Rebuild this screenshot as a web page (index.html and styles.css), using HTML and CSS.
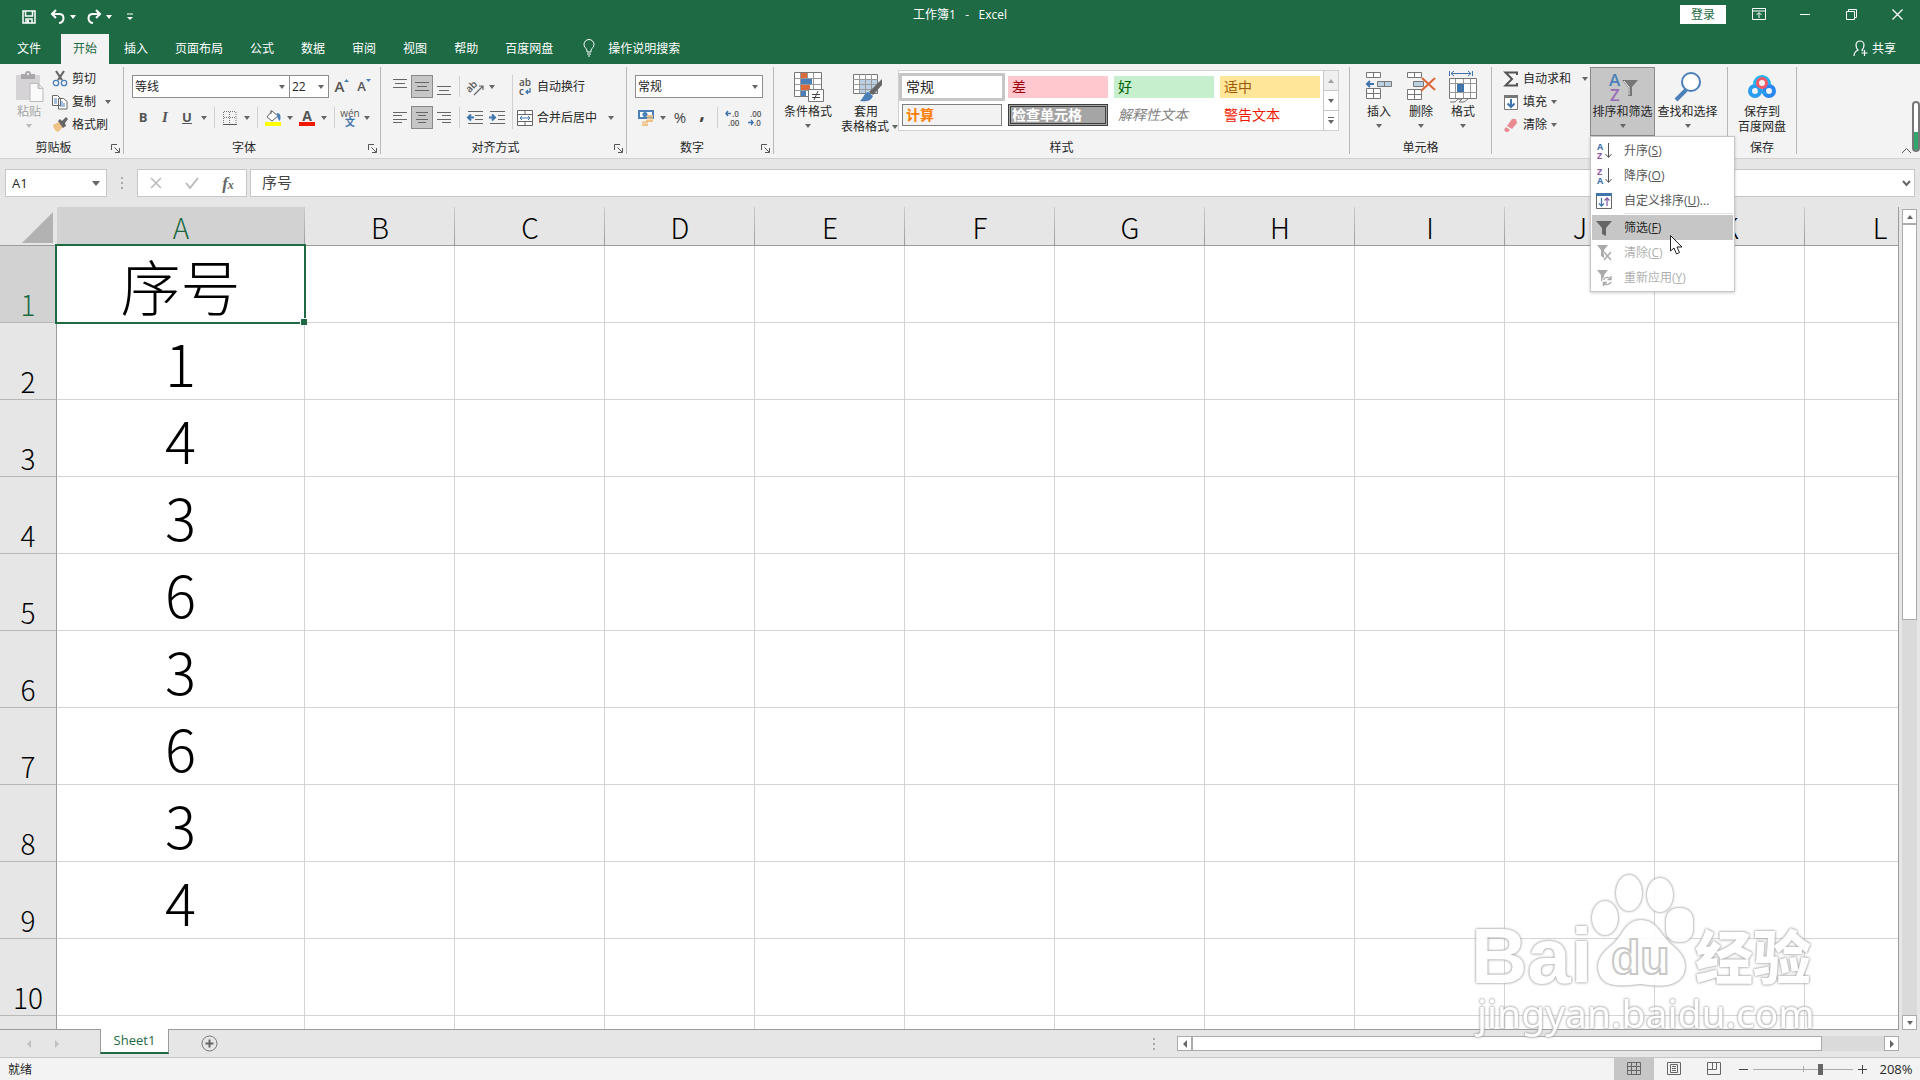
FILE: index.html
```html
<!DOCTYPE html>
<html lang="zh-CN">

<head>
  <meta charset="UTF-8">
  <meta name="viewport" content="width=device-width, initial-scale=1.0">
  <title>工作簿1 - Excel</title>
  <link rel="stylesheet" href="styles.css">
</head>

<body>
  <header class="titlebar">
    <div class="quick-access">
      <button class="qa-btn" aria-label="保存">
        <svg width="16" height="16" viewBox="0 0 16 16"><path d="M2 2h12v12H2zM4.500 2v5h7V2M5 14v-4h6v4" fill="none" stroke="#fff" stroke-width="1.500"/><path d="M6 11h2v3H6z" fill="#fff"/></svg>
      </button>
      <button class="qa-btn" aria-label="撤消">
        <svg width="16" height="16" viewBox="0 0 16 16"><path d="M6 1L2 5l4 4M2 5h7c6 0 6 8 0 9" fill="none" stroke="#fff" stroke-width="2"/></svg>
      </button>
      <i class="caret"></i>
      <button class="qa-btn" aria-label="恢复">
        <svg width="16" height="16" viewBox="0 0 16 16"><path d="M10 1l4 4-4 4M14 5H7C1 5 1 13 7 14" fill="none" stroke="#fff" stroke-width="2"/></svg>
      </button>
      <i class="caret"></i>
      <button class="qa-btn qa-more" aria-label="自定义快速访问工具栏">
        <svg width="8" height="8" viewBox="0 0 8 8"><path d="M1 1h6" stroke="#fff"/><path d="M1 4h6L4 7z" fill="#fff"/></svg>
      </button>
    </div>
    <div class="title">工作簿1&nbsp;&nbsp; -&nbsp;&nbsp; Excel</div>
    <div class="window-controls">
      <button class="login">登录</button>
      <button class="win-btn" aria-label="功能区显示选项"><svg width="14" height="12" viewBox="0 0 14 12"><path d="M.5.5h13v11H.5zM.5 3h13M7 10V5M4.500 7L7 4.500 9.500 7" fill="none" stroke="#fff"/></svg></button>
      <button class="win-btn" aria-label="最小化"><svg width="10" height="10" viewBox="0 0 10 10"><path d="M0 5.500h10" stroke="#fff"/></svg></button>
      <button class="win-btn" aria-label="还原"><svg width="11" height="11" viewBox="0 0 11 11"><path d="M.5 2.500h8v8h-8zM2.500 2.500v-2h8v8h-2" fill="none" stroke="#fff"/></svg></button>
      <button class="win-btn" aria-label="关闭"><svg width="11" height="11" viewBox="0 0 11 11"><path d="M.5.5l10 10M10.500.5l-10 10" stroke="#fff" stroke-width="1.200"/></svg></button>
    </div>
  </header>

  <nav class="tabs">
    <button class="tab tab-file">文件</button>
    <button class="tab active">开始</button>
    <button class="tab">插入</button>
    <button class="tab">页面布局</button>
    <button class="tab">公式</button>
    <button class="tab">数据</button>
    <button class="tab">审阅</button>
    <button class="tab">视图</button>
    <button class="tab">帮助</button>
    <button class="tab">百度网盘</button>
    <button class="tab tell-me">
      <svg width="12" height="18" viewBox="0 0 12 18"><path d="M4 13v-2C3 9 1 8 1 5.500a5 5 0 0 1 10 0C11 8 9 9 8 11v2zM4 15h4M5 17h2" fill="none" stroke="#fff"/></svg>
      操作说明搜索
    </button>
    <button class="tab share">
      <svg width="15" height="17" viewBox="0 0 15 17"><path d="M1 16c0-4 2-5 4-6C3 8 3 6 3 5a4 4 0 0 1 8 0c0 2-1 4-2 5l1 1M11.500 10v6M8.500 13h6" fill="none" stroke="#fff" stroke-width="1.200"/></svg>
      共享
    </button>
  </nav>

  <section class="ribbon">
    <!-- Clipboard -->
    <div class="group group-clipboard">
      <div class="group-body">
        <button class="big-btn disabled">
          <svg width="32" height="32" viewBox="0 0 32 32"><path d="M3 4h24v25H3z" fill="#d5d3d5"/><path d="M8 3h4a3 3 0 0 1 6 0h4v5H8z" fill="#a9a7a9"/><circle cx="15" cy="3" r="1" fill="#fff"/><path d="M17 12.500h8l5 5v13H17zM25 12.500v5h5" fill="#fafafa" stroke="#bbb"/></svg>
          <span>粘贴</span>
          <i class="caret"></i>
        </button>
        <div class="stack">
          <button class="small-btn"><svg width="16" height="16" viewBox="0 0 16 16"><path d="M4 0l6 9M12 0L6 9" stroke="#666" stroke-width="2.200"/><circle cx="4" cy="12" r="2.700" fill="none" stroke="#4a7fb8" stroke-width="1.300"/><circle cx="12" cy="12" r="2.700" fill="none" stroke="#4a7fb8" stroke-width="1.300"/></svg>剪切</button>
          <button class="small-btn"><svg width="16" height="16" viewBox="0 0 16 16"><path d="M.5 1.500h5l3 3v7h-8zM6.500 4.500h5l3.500 3v7.500H6.500z" fill="#fff" stroke="#666"/><path d="M2 5h3M2 7h3M2 9h3M8 8h3M8 10h5M8 12h5" stroke="#4a7fb8"/></svg>复制<i class="caret caret-far"></i></button>
          <button class="small-btn"><svg width="16" height="16" viewBox="0 0 16 16"><path d="M1 8l6-3 4 5-5 5c-3-1-4-3-5-7z" fill="#eec184"/><path d="M6 4l2-2 2 2 4-4 2 2-3 4 1 3-3 2z" fill="#666"/></svg>格式刷</button>
        </div>
      </div>
      <div class="group-label"><span>剪贴板</span><button class="launcher" aria-label="剪贴板设置"><svg width="9" height="9" viewBox="0 0 9 9"><path d="M.5 6V.5H6M3.500 3.500L8 8M8.500 4v4.500H4" fill="none" stroke="#555"/></svg></button></div>
    </div>

    <!-- Font -->
    <div class="group group-font">
      <div class="group-body rows">
        <div class="row">
          <span class="combo combo-font"><select aria-label="字体"><option>等线</option></select><i class="caret"></i></span>
          <span class="combo combo-size"><select aria-label="字号"><option>22</option></select><i class="caret"></i></span>
          <button class="icon-btn glyph-lg" aria-label="增大字号">A<svg width="5" height="18" viewBox="0 0 5 18"><path d="M0 4l2.500-3L5 4z" fill="#4a7fb8"/></svg></button>
          <button class="icon-btn glyph-md" aria-label="减小字号">A<svg width="5" height="18" viewBox="0 0 5 18"><path d="M0 1h5L2.500 4z" fill="#4a7fb8"/></svg></button>
        </div>
        <div class="row">
          <button class="icon-btn glyph"><b>B</b></button>
          <button class="icon-btn glyph serif"><b><em>I</em></b></button>
          <button class="icon-btn glyph"><b><u>U</u></b></button>
          <i class="caret"></i>
          <i class="sep"></i>
          <button class="icon-btn" aria-label="边框"><svg width="14" height="14" viewBox="0 0 14 14"><path d="M1 .5h12M1 6.500h12M.5 1v12M6.500 1v12M13 1v12" stroke="#777" stroke-dasharray="1 1"/><path d="M0 13.500h14" stroke="#555"/></svg></button>
          <i class="caret"></i>
          <i class="sep"></i>
          <button class="icon-btn" aria-label="填充颜色"><svg width="18" height="16" viewBox="0 0 18 16"><path d="M8 1l6 5-6 5-5-4z" fill="#fff" stroke="#666"/><path d="M7 4V0" stroke="#666"/><path d="M13 3c4 0 4 4 3 8-2-1-2-3-3-5z" fill="#4a7fb8"/><path d="M1 12h16v4H1z" fill="#ff0"/></svg></button>
          <i class="caret"></i>
          <button class="icon-btn font-color" aria-label="字体颜色"><b>A</b></button>
          <i class="caret"></i>
          <i class="sep"></i>
          <button class="icon-btn pinyin" aria-label="拼音"><span>wén</span><b>文</b></button>
          <i class="caret"></i>
        </div>
      </div>
      <div class="group-label"><span>字体</span><button class="launcher" aria-label="字体设置"><svg width="9" height="9" viewBox="0 0 9 9"><path d="M.5 6V.5H6M3.500 3.500L8 8M8.500 4v4.500H4" fill="none" stroke="#555"/></svg></button></div>
    </div>

    <!-- Alignment -->
    <div class="group group-align">
      <div class="group-body">
        <div class="rows">
          <div class="row">
            <button class="icon-btn" aria-label="顶端对齐"><svg width="14" height="16" viewBox="0 0 14 16"><path d="M0 .5h14M2 4.500h10M0 8.500h14" stroke="#666"/></svg></button>
            <button class="icon-btn pressed" aria-label="垂直居中"><svg width="14" height="16" viewBox="0 0 14 16"><path d="M0 3.500h14M2 7.500h10M0 11.500h14" stroke="#666"/></svg></button>
            <button class="icon-btn" aria-label="底端对齐"><svg width="14" height="16" viewBox="0 0 14 16"><path d="M0 7.500h14M2 11.500h10M0 15.500h14" stroke="#666"/></svg></button>
            <i class="sep"></i>
            <button class="icon-btn" aria-label="方向"><svg width="17" height="16" viewBox="0 0 17 16"><text x="-1" y="10" transform="rotate(-45 6 8)" class="svg-ab">ab</text><path d="M7 16l9-9M16 11V7h-4" fill="none" stroke="#666" stroke-width="1.200"/></svg></button>
            <i class="caret"></i>
          </div>
          <div class="row">
            <button class="icon-btn" aria-label="左对齐"><svg width="14" height="12" viewBox="0 0 14 12"><path d="M0 .5h14M0 3.500h9M0 7.500h14M0 10.500h9" stroke="#666"/></svg></button>
            <button class="icon-btn pressed" aria-label="居中"><svg width="14" height="12" viewBox="0 0 14 12"><path d="M1 .5h12M3 3.500h8M1 7.500h12M3 10.500h8" stroke="#666"/></svg></button>
            <button class="icon-btn" aria-label="右对齐"><svg width="14" height="12" viewBox="0 0 14 12"><path d="M0 .5h14M5 3.500h9M0 7.500h14M5 10.500h9" stroke="#666"/></svg></button>
            <i class="sep"></i>
            <button class="icon-btn" aria-label="减少缩进"><svg width="16" height="14" viewBox="0 0 16 14"><path d="M1 .5h15M8 4.500h8M8 8.500h8M1 12.500h15" stroke="#666"/><path d="M7 6.500H2M4 3.500l-3 3 3 3" fill="none" stroke="#3f74ad" stroke-width="2"/></svg></button>
            <button class="icon-btn" aria-label="增加缩进"><svg width="16" height="14" viewBox="0 0 16 14"><path d="M1 .5h15M9 4.500h7M9 8.500h7M1 12.500h15" stroke="#666"/><path d="M0 6.500h5M3 3.500l3 3-3 3" fill="none" stroke="#3f74ad" stroke-width="2"/></svg></button>
          </div>
        </div>
        <i class="sep sep-tall"></i>
        <div class="rows">
          <button class="small-btn"><svg width="16" height="18" viewBox="0 0 16 18"><text x="2" y="8" class="svg-ab">ab</text><text x="2" y="17" class="svg-ab">c</text><path d="M13 10v4H9M11 12l-2 2 2 2" fill="none" stroke="#3f74ad" stroke-width="1.300"/></svg>自动换行</button>
          <button class="small-btn"><svg width="16" height="16" viewBox="0 0 16 16"><path d="M.5.5h15v15H.5zM.5 4.500h15M.5 11.500h15M8 .5v4M8 11.500v4" fill="#fff" stroke="#666"/><path d="M3 8h10M5 6L3 8l2 2M11 6l2 2-2 2" fill="none" stroke="#3f74ad"/></svg>合并后居中<i class="caret caret-far"></i></button>
        </div>
      </div>
      <div class="group-label"><span>对齐方式</span><button class="launcher" aria-label="对齐设置"><svg width="9" height="9" viewBox="0 0 9 9"><path d="M.5 6V.5H6M3.500 3.500L8 8M8.500 4v4.500H4" fill="none" stroke="#555"/></svg></button></div>
    </div>

    <!-- Number -->
    <div class="group group-number">
      <div class="group-body rows">
        <div class="row">
          <span class="combo combo-format"><select aria-label="数字格式"><option>常规</option></select><i class="caret"></i></span>
        </div>
        <div class="row">
          <button class="icon-btn" aria-label="会计数字格式"><svg width="16" height="16" viewBox="0 0 16 16"><path d="M0 0h16v9H0z" fill="#4a7fb8"/><path d="M2 2h12v5H2z" fill="#fff"/><circle cx="7" cy="4.500" r="2.500" fill="#4a7fb8"/><path d="M9 6h6M9 8.500h6M8 11h7M4 12.500h6M4 15h6" stroke="#eec184" stroke-width="2"/></svg></button>
          <i class="caret"></i>
          <button class="icon-btn percent">%</button>
          <button class="icon-btn comma"><b>,</b></button>
          <i class="sep"></i>
          <button class="icon-btn" aria-label="增加小数位数"><svg width="16" height="16" viewBox="0 0 16 16"><path d="M6 3.500H1M3 1L1 3.500 3 6" fill="none" stroke="#3f74ad" stroke-width="1.500"/><text x="7" y="7" class="svg-num">.0</text><text x="3" y="16" class="svg-num">.00</text></svg></button>
          <button class="icon-btn" aria-label="减少小数位数"><svg width="16" height="16" viewBox="0 0 16 16"><path d="M1 12.500h5M4 10l2 2.500L4 15" fill="none" stroke="#3f74ad" stroke-width="1.500"/><text x="3" y="7" class="svg-num">.00</text><text x="7" y="16" class="svg-num">.0</text></svg></button>
        </div>
      </div>
      <div class="group-label"><span>数字</span><button class="launcher" aria-label="数字设置"><svg width="9" height="9" viewBox="0 0 9 9"><path d="M.5 6V.5H6M3.500 3.500L8 8M8.500 4v4.500H4" fill="none" stroke="#555"/></svg></button></div>
    </div>

    <!-- Styles -->
    <div class="group group-styles">
      <div class="group-body">
        <button class="big-btn">
          <svg width="32" height="32" viewBox="0 0 32 32"><path d="M2.500 1.500h27v24h-27z" fill="#fff" stroke="#777"/><path d="M9 2h6v5H9zM9 14h9v5H9z" fill="#dc6a3c"/><path d="M9 8h11v5H9zM9 20h5v5H9z" fill="#4a7fb8"/><path d="M3 7.500h26M3 13.500h26M3 19.500h26M8.500 2v23M15.500 2v5M21.500 2v23" stroke="#999"/><path d="M16.500 18.500h15v12h-15z" fill="#fff" stroke="#777"/><path d="M20 23.500h8M20 26.500h8M26 20l-4 9" stroke="#444"/></svg>
          <span>条件格式</span>
          <i class="caret"></i>
        </button>
        <button class="big-btn">
          <svg width="32" height="32" viewBox="0 0 32 32"><path d="M3.500 3.500h24v19h-24z" fill="#fff" stroke="#777"/><path d="M9 8h18v14H9z" fill="#bcd0e4"/><path d="M3 8.500h25M3 13.500h25M3 18.500h25M9.500 3v20M15.500 3v20M21.500 3v20" stroke="#999"/><path d="M32 8v6l-9 10-4-3z" fill="#666"/><path d="M18 21l5 4c-2 5-7 6-13 5 4-3 3-7 8-9z" fill="#4a7fb8"/></svg>
          <span>套用</span>
          <span class="with-caret">表格格式<i class="caret"></i></span>
        </button>
        <div class="gallery">
          <div class="gallery-items">
            <button class="style style-normal">常规</button>
            <button class="style style-bad">差</button>
            <button class="style style-good">好</button>
            <button class="style style-neutral">适中</button>
            <button class="style style-calc">计算</button>
            <button class="style style-check">检查单元格</button>
            <button class="style style-note">解释性文本</button>
            <button class="style style-warn">警告文本</button>
          </div>
          <div class="gallery-scroll">
            <button class="off" aria-label="上一行"><i class="caret caret-up"></i></button>
            <button aria-label="下一行"><i class="caret"></i></button>
            <button aria-label="其他"><i class="bar"></i><i class="caret"></i></button>
          </div>
        </div>
      </div>
      <div class="group-label"><span>样式</span></div>
    </div>

    <!-- Cells -->
    <div class="group group-cells">
      <div class="group-body">
        <button class="big-btn">
          <svg width="28" height="32" viewBox="0 0 28 32"><path d="M1.500 1.500h14v5h-14zM8.500 1.500v5M1.500 17.500h14v10h-14zM8.500 17.500v10M1.500 22.500h14" fill="#fff" stroke="#777"/><path d="M12.500 10.500h14v5h-14zM19.500 10.500v5" fill="#bcd0e4" stroke="#777"/><path d="M9 13H3M5 10l-3 3 3 3" fill="none" stroke="#3f74ad" stroke-width="2"/></svg>
          <span>插入</span>
          <i class="caret"></i>
        </button>
        <button class="big-btn">
          <svg width="30" height="32" viewBox="0 0 30 32"><path d="M1.500 1.500h14v5h-14zM8.500 1.500v5M1.500 18.500h14v10h-14zM8.500 18.500v10M1.500 23.500h14" fill="#fff" stroke="#777"/><path d="M7.500 10.500h10v5h-10z" fill="#bcd0e4" stroke="#777"/><path d="M16 7l13 12M29 7L15 20" stroke="#dc6a3c" stroke-width="2.200"/></svg>
          <span>删除</span>
          <i class="caret"></i>
        </button>
        <button class="big-btn">
          <svg width="30" height="32" viewBox="0 0 30 32"><path d="M1.500 0v5M24.500 0v5M3 2.500h20M6 0L3 2.500 6 5M20 0l3 2.500L20 5" fill="none" stroke="#3f74ad"/><path d="M1.500 7.500h27v20h-27z" fill="#fff" stroke="#777"/><path d="M1 12.500h28M1 21.500h28M7.500 8v19M15.500 8v19M22.500 8v19" stroke="#999"/><path d="M9 13h7v8H9z" fill="#3f74ad"/><path d="M2 31h5l3-3h4l-3 3h5l4-3" fill="none" stroke="#777"/></svg>
          <span>格式</span>
          <i class="caret"></i>
        </button>
      </div>
      <div class="group-label"><span>单元格</span></div>
    </div>

    <!-- Editing -->
    <div class="group group-editing">
      <div class="group-body">
        <div class="stack">
          <button class="small-btn"><svg width="16" height="16" viewBox="0 0 16 16"><path d="M14 4V1.500H2.500L9 8l-6.500 6.500H14V12" fill="none" stroke="#555" stroke-width="2"/></svg>自动求和<i class="caret caret-far"></i></button>
          <button class="small-btn"><svg width="16" height="16" viewBox="0 0 16 16"><path d="M1.500 1.500h13v14h-13z" fill="#fff" stroke="#777"/><path d="M1 1h14v3H1z" fill="#777"/><path d="M8 5v8M4.500 9.500L8 13l3.500-3.500" fill="none" stroke="#3f74ad" stroke-width="2"/></svg>填充<i class="caret"></i></button>
          <button class="small-btn"><svg width="16" height="16" viewBox="0 0 16 16"><path d="M9 2h4l1 4-5 6-5-3z" fill="#e98a93"/><path d="M3 10l4 3-2 2H3l-2-2z" fill="#e98a93"/></svg>清除<i class="caret"></i></button>
        </div>
        <div class="sort-filter">
          <button class="big-btn pressed">
            <svg width="32" height="32" viewBox="0 0 32 32"><text x="2" y="15" class="svg-a">A</text><text x="3" y="30" class="svg-z">Z</text><path d="M15 9h16l-6 7v9h-4v-9z" fill="#777"/><path d="M17 10l5 6v8" fill="none" stroke="#eee"/></svg>
            <span>排序和筛选</span>
            <i class="caret"></i>
          </button>
          <ul class="menu">
            <li><button><svg width="18" height="18" viewBox="0 0 18 18"><text x="2" y="8" class="svg-a-sm">A</text><text x="2" y="17" class="svg-z-sm">Z</text><path d="M13.500 1v14M10.500 12l3 3.500 3-3.500" fill="none" stroke="#555"/></svg><span>升序(<u>S</u>)</span></button></li>
            <li><button><svg width="18" height="18" viewBox="0 0 18 18"><text x="2" y="8" class="svg-z-sm">Z</text><text x="2" y="17" class="svg-a-sm">A</text><path d="M13.500 1v14M10.500 12l3 3.500 3-3.500" fill="none" stroke="#555"/></svg><span>降序(<u>O</u>)</span></button></li>
            <li><button><svg width="18" height="18" viewBox="0 0 18 18"><path d="M1.500 1.500h15v15h-15z" fill="#fff" stroke="#666"/><path d="M1 1h16v3H1z" fill="#3f74ad"/><path d="M6.500 6v8M4 11.500L6.500 14 9 11.500" fill="none" stroke="#3f74ad" stroke-width="1.300"/><path d="M12 14V6M9.500 8.500L12 6l2.500 2.500" fill="none" stroke="#8a5fa8" stroke-width="1.300"/></svg><span>自定义排序(<u>U</u>)...</span></button></li>
            <li class="divider"></li>
            <li><button class="hover"><svg width="18" height="18" viewBox="0 0 18 18"><path d="M1 2h16l-6 7v8l-4-2V9z" fill="#666"/></svg><span>筛选(<u>F</u>)</span></button></li>
            <li><button disabled><svg width="18" height="18" viewBox="0 0 18 18"><path d="M2 1h11L9 6v8l-3-2V6z" fill="#aaa"/><path d="M9 8l8 8M17 8l-8 8" stroke="#fff" stroke-width="3"/><path d="M9 8l7 8M16 8l-7 8" stroke="#aaa" stroke-width="1.500"/></svg><span>清除(<u>C</u>)</span></button></li>
            <li><button disabled><svg width="18" height="18" viewBox="0 0 18 18"><path d="M2 1h11L9 6v8l-3-2V6z" fill="#aaa"/><circle cx="12" cy="12" r="5" fill="#fff"/><path d="M8.500 11a4 4 0 0 1 7-1M16 7v3.500h-3.500M16 13a4 4 0 0 1-7 1M8.500 17v-3.500H12" fill="none" stroke="#aaa" stroke-width="1.400"/></svg><span>重新应用(<u>Y</u>)</span></button></li>
          </ul>
          <svg class="pointer" width="13" height="20" viewBox="0 0 13 20"><path d="M.5.500v15.500l3.500-3 2.500 6 3-1.500-2.500-5.500h5z" fill="#fff" stroke="#222"/></svg>
        </div>
        <button class="big-btn">
          <svg width="32" height="32" viewBox="0 0 32 32"><path d="M4 29l10-10" stroke="#4a7fb8" stroke-width="4"/><circle cx="19" cy="11" r="9" fill="#fff" stroke="#4a7fb8" stroke-width="2"/></svg>
          <span>查找和选择</span>
          <i class="caret"></i>
        </button>
      </div>
      <div class="group-label"><span>编辑</span></div>
    </div>

    <!-- Baidu netdisk -->
    <div class="group group-save">
      <div class="group-body">
        <button class="big-btn">
          <svg width="32" height="32" viewBox="0 0 32 32"><circle cx="9" cy="20" r="5" fill="none" stroke="#2a9df0" stroke-width="4"/><circle cx="23" cy="20" r="5" fill="none" stroke="#2a86f0" stroke-width="4"/><path d="M9 13a7 7 0 0 1 14 0" fill="none" stroke="#22b5f2" stroke-width="4"/><circle cx="16" cy="12" r="4.500" fill="#f3f3f3" stroke="#ee5a66" stroke-width="3"/><path d="M12 18l8 5" stroke="#2a9df0" stroke-width="3"/></svg>
          <span>保存到</span>
          <span>百度网盘</span>
        </button>
      </div>
      <div class="group-label"><span>保存</span></div>
    </div>

    <div class="ribbon-end">
      <button class="collapse" aria-label="折叠功能区"><svg width="11" height="7" viewBox="0 0 11 7"><path d="M1 6l4.500-4.500L10 6" fill="none" stroke="#555"/></svg></button>
      <div class="gauge"></div>
    </div>
  </section>

  <div class="formula-bar">
    <div class="name-box"><input type="text" value="A1" aria-label="名称框"><i class="caret"></i></div>
    <div class="dots"><i></i><i></i><i></i></div>
    <div class="fx-box">
      <button aria-label="取消"><svg width="12" height="12" viewBox="0 0 12 12"><path d="M1 1l10 10M11 1L1 11" stroke="#bbb" stroke-width="1.600"/></svg></button>
      <button aria-label="输入"><svg width="14" height="12" viewBox="0 0 14 12"><path d="M1 6l4 5 8-10" fill="none" stroke="#bbb" stroke-width="2"/></svg></button>
      <button class="fx"><em>f</em><sub><em>x</em></sub></button>
    </div>
    <div class="formula-box"><input type="text" value="序号" aria-label="编辑栏"><svg width="9" height="7" viewBox="0 0 9 7"><path d="M1 1l3.500 4L8 1" fill="none" stroke="#666" stroke-width="2"/></svg></div>
  </div>

  <main class="workspace">
    <div class="sheet">
      <table>
        <colgroup>
          <col class="col-head"><col class="col-a"><col><col><col><col><col><col><col><col><col><col><col>
        </colgroup>
        <thead>
          <tr><th class="corner"><svg width="31" height="31" viewBox="0 0 31 31"><path d="M31 0v31H0z" fill="#b2b2b2"/></svg></th><th class="current">A</th><th>B</th><th>C</th><th>D</th><th>E</th><th>F</th><th>G</th><th>H</th><th>I</th><th>J</th><th>K</th><th>L</th></tr>
        </thead>
        <tbody>
          <tr><th class="current">1</th><td class="selected">序号</td><td></td><td></td><td></td><td></td><td></td><td></td><td></td><td></td><td></td><td></td><td></td></tr>
          <tr><th>2</th><td>1</td><td></td><td></td><td></td><td></td><td></td><td></td><td></td><td></td><td></td><td></td><td></td></tr>
          <tr><th>3</th><td>4</td><td></td><td></td><td></td><td></td><td></td><td></td><td></td><td></td><td></td><td></td><td></td></tr>
          <tr><th>4</th><td>3</td><td></td><td></td><td></td><td></td><td></td><td></td><td></td><td></td><td></td><td></td><td></td></tr>
          <tr><th>5</th><td>6</td><td></td><td></td><td></td><td></td><td></td><td></td><td></td><td></td><td></td><td></td><td></td></tr>
          <tr><th>6</th><td>3</td><td></td><td></td><td></td><td></td><td></td><td></td><td></td><td></td><td></td><td></td><td></td></tr>
          <tr><th>7</th><td>6</td><td></td><td></td><td></td><td></td><td></td><td></td><td></td><td></td><td></td><td></td><td></td></tr>
          <tr><th>8</th><td>3</td><td></td><td></td><td></td><td></td><td></td><td></td><td></td><td></td><td></td><td></td><td></td></tr>
          <tr><th>9</th><td>4</td><td></td><td></td><td></td><td></td><td></td><td></td><td></td><td></td><td></td><td></td><td></td></tr>
          <tr><th>10</th><td></td><td></td><td></td><td></td><td></td><td></td><td></td><td></td><td></td><td></td><td></td><td></td></tr>
          <tr><th></th><td></td><td></td><td></td><td></td><td></td><td></td><td></td><td></td><td></td><td></td><td></td><td></td></tr>
        </tbody>
      </table>
    </div>
    <div class="scroll-v">
      <button aria-label="向上滚动"><i class="caret caret-up"></i></button>
      <div class="track"><div class="thumb"></div></div>
      <button aria-label="向下滚动"><i class="caret"></i></button>
    </div>
  </main>

  <div class="sheet-bar">
    <div class="sheet-nav">
      <button aria-label="上一个工作表"><i class="arrow arrow-left"></i></button>
      <button aria-label="下一个工作表"><i class="arrow arrow-right"></i></button>
    </div>
    <button class="sheet-tab">Sheet1</button>
    <button class="add-sheet" aria-label="新工作表"><svg width="17" height="17" viewBox="0 0 17 17"><circle cx="8.500" cy="8.500" r="7.500" fill="none" stroke="#777"/><path d="M4.500 8.500h8M8.500 4.500v8" stroke="#666" stroke-width="2"/></svg></button>
    <div class="dots"><i></i><i></i><i></i></div>
    <div class="scroll-h">
      <button aria-label="向左滚动"><i class="arrow arrow-left"></i></button>
      <div class="track"><div class="thumb"></div></div>
      <button aria-label="向右滚动"><i class="arrow arrow-right"></i></button>
    </div>
  </div>

  <footer class="status-bar">
    <span class="status-text">就绪</span>
    <button class="view-btn on" aria-label="普通"><svg width="14" height="14" viewBox="0 0 14 14"><path d="M.5.5h13v12H.5zM.5 4.500h13M.5 8.500h13M4.500.5v12M9.500.5v12" fill="none" stroke="#666"/></svg></button>
    <button class="view-btn" aria-label="页面布局"><svg width="14" height="14" viewBox="0 0 14 14"><path d="M.5.5h13v12H.5zM3.500 2.500h7v8h-7zM5 4.500h4M5 6.500h4M5 8.500h4" fill="none" stroke="#666"/></svg></button>
    <button class="view-btn" aria-label="分页预览"><svg width="14" height="14" viewBox="0 0 14 14"><path d="M.5.5h13v12H.5zM5.500.5v7M.5 7.500h9v-7" fill="none" stroke="#666"/></svg></button>
    <button class="zoom-btn" aria-label="缩小"><svg width="9" height="9" viewBox="0 0 9 9"><path d="M0 4.500h9" stroke="#444"/></svg></button>
    <input class="zoom-slider" type="range" min="0" max="100" value="68" aria-label="缩放">
    <button class="zoom-btn" aria-label="放大"><svg width="9" height="9" viewBox="0 0 9 9"><path d="M0 4.500h9M4.500 0v9" stroke="#444"/></svg></button>
    <span class="zoom-value">208%</span>
  </footer>

  <svg class="watermark" width="360" height="180" viewBox="0 0 360 180">
    <g class="mark">
      <text x="12" y="113" class="mark-baidu">Bai</text>
      <ellipse cx="146" cy="48" rx="13" ry="17"/>
      <ellipse cx="170" cy="23" rx="13" ry="18"/>
      <ellipse cx="201" cy="25" rx="13" ry="17"/>
      <rect x="207" y="38" width="27" height="34" rx="12"/>
      <path d="M182 50c-16 0-18 16-29 25-12 9-16 18-13 28 4 13 17 14 42 11 25 4 38 1 43-11 3-10 0-18-12-28-11-9-15-25-31-25z"/>
      <text x="236" y="109" class="mark-cn">经验</text>
      <text x="18" y="158" class="mark-url">jingyan.baidu.com</text>
    </g>
    <text x="152" y="104" class="mark-du">du</text>
  </svg>
</body>

</html>
```
FILE: styles.css
```css
* {
  box-sizing: border-box;
}

html,
body {
  height: 100%;
}

body {
  margin: 0;
  display: flex;
  flex-direction: column;
  overflow: hidden;
  background: #e6e6e6;
  color: #262626;
  font-family: "Open Sans", "Noto Sans CJK SC", sans-serif;
  font-size: 12px;
  line-height: 15px;
}

button,
input,
select {
  font: inherit;
  color: inherit;
  background: none;
  border: 0;
  padding: 0;
  margin: 0;
  border-radius: 0;
}

button {
  display: flex;
  align-items: center;
  justify-content: center;
  white-space: nowrap;
}

svg {
  display: block;
  flex: none;
  overflow: visible;
}

.caret {
  flex: none;
  width: 6px;
  border: 3px solid transparent;
  border-top: 4px solid #666;
  border-bottom: 0;
}

.caret-up {
  border-top: 0;
  border-bottom: 4px solid #666;
}

/* Title bar */
.titlebar {
  flex: none;
  height: 34px;
  display: grid;
  grid-template-columns: 1fr auto 1fr;
  align-items: center;
  background: #1d6a45;
  color: #fff;
}

.quick-access {
  display: flex;
  align-items: center;
  padding-left: 21px;
}

.quick-access .qa-btn {
  margin-right: 13px;
}

.quick-access .qa-btn:not(:first-child) {
  margin-right: 4px;
}

.quick-access .caret {
  border-top-color: #fff;
  margin-right: 10px;
}

.quick-access .qa-more {
  margin-left: 4px;
}

.title,
.window-controls {
  padding-bottom: 6px;
}

.window-controls {
  display: flex;
  justify-content: flex-end;
  align-items: center;
}

.login {
  width: 46px;
  height: 19px;
  margin-right: 10px;
  background: #fff;
  color: #1d6a45;
}

.win-btn {
  width: 46px;
  height: 28px;
}

/* Tabs */
.tabs {
  flex: none;
  height: 30px;
  display: flex;
  gap: 3px;
  padding-left: 5px;
  background: #1d6a45;
  color: #fff;
}

.tab {
  padding: 0 12px 2px;
}

.tab-file {
  margin-right: 5px;
}

.tab.active {
  background: #f3f3f3;
  color: #1d6a45;
}

.tell-me {
  gap: 13px;
  margin-left: 3px;
}

.share {
  gap: 4px;
  margin-left: auto;
  margin-right: 12px;
}

/* Ribbon */
.ribbon {
  flex: none;
  display: flex;
  height: 95px;
  padding: 3px 0 4px;
  background: #f3f3f3;
  border-bottom: 1px solid #d0d0d0;
}

.group {
  flex: none;
  display: flex;
  flex-direction: column;
  border-right: 1px solid #b8b8b8;
}

.group-clipboard { width: 124px; }
.group-font { width: 257px; }
.group-align { width: 246px; }
.group-number { width: 147px; }
.group-styles { width: 576px; }
.group-cells { width: 142px; }
.group-editing { width: 236px; }
.group-save { width: 69px; }

.group-body {
  flex: 1;
  display: flex;
}

.group-label {
  display: flex;
  height: 15px;
  line-height: 17px;
}

.group-label span {
  flex: 1;
  text-align: center;
}

.launcher {
  width: 16px;
  padding-top: 4px;
}

.rows {
  display: flex;
  flex-direction: column;
  gap: 8px;
  padding-top: 8px;
}

.group-font .rows,
.group-number .rows,
.group-align .rows:first-child {
  padding-left: 8px;
}

.row {
  display: flex;
  align-items: center;
  height: 23px;
}

.row > .caret {
  margin: 0 3px;
}

.stack {
  display: flex;
  flex-direction: column;
}

.small-btn {
  height: 23px;
  justify-content: flex-start;
  gap: 4px;
}

.small-btn .caret-far {
  margin-left: 7px;
}

.icon-btn {
  width: 22px;
  height: 23px;
}

.pressed {
  background: #c6c6c6;
  outline: 1px solid #8a8a8a;
  outline-offset: -1px;
}

.sep {
  width: 1px;
  height: 21px;
  margin: 0 4px;
  background: #d0d0d0;
}

.sep-tall {
  height: 54px;
  margin-top: 8px;
}

.big-btn {
  height: 69px;
  flex-direction: column;
  justify-content: flex-start;
  padding-top: 4px;
}

.big-btn svg {
  margin-bottom: 1px;
}

.big-btn > .caret {
  margin-top: 5px;
}

.with-caret {
  display: flex;
  align-items: center;
  gap: 3px;
  margin-left: 7px;
}

.disabled {
  color: #a6a6a6;
}

.disabled .caret {
  border-top-color: #bbb;
}

.combo {
  position: relative;
  height: 23px;
}

.combo select {
  appearance: none;
  width: 100%;
  height: 100%;
  padding-left: 2px;
  background: #fff;
  border: 1px solid #8e8e8e;
}

.combo .caret {
  position: absolute;
  right: 5px;
  top: 10px;
}

.combo-font { width: 158px; }
.combo-size { width: 39px; }
.combo-format { width: 128px; }

.combo-size select {
  border-left: 0;
}

.combo-size + .icon-btn {
  margin-left: 2px;
}

.glyph {
  font-size: 13px;
  color: #555;
}

.serif {
  font-family: "Liberation Serif", serif;
  font-size: 15px;
}

.glyph-lg,
.glyph-md {
  color: #555;
  font-size: 15px;
  font-weight: 600;
}

.glyph-md {
  font-size: 13px;
}

.font-color b {
  width: 16px;
  height: 16px;
  line-height: 12px;
  font-size: 14px;
  color: #555;
  border-bottom: 4px solid #f01800;
}

.pinyin {
  flex-direction: column;
  font-size: 10px;
  line-height: 8px;
  color: #555;
}

.pinyin b {
  color: #3f74ad;
  line-height: 10px;
}

.percent {
  font-size: 15px;
  color: #444;
}

.comma {
  font-size: 20px;
  color: #444;
  padding-bottom: 13px;
}

.group-clipboard .big-btn {
  width: 30px;
  margin-left: 14px;
}

.group-clipboard .stack {
  margin-left: 8px;
}

.group-clipboard .caret-far {
  margin-left: 5px;
}

.group-styles .big-btn {
  width: 58px;
}

.group-styles .big-btn:first-child {
  margin-left: 5px;
}

.group-cells .group-body {
  padding-left: 8px;
}

.group-cells .big-btn {
  width: 42px;
}

.group-editing .stack {
  width: 87px;
  margin-left: 11px;
}

.group-editing .big-btn {
  width: 65px;
}

.group-save .big-btn {
  width: 68px;
}

/* Cell styles gallery */
.gallery {
  display: flex;
  height: 61px;
  margin-top: 3px;
  margin-left: 3px;
  border: 1px solid #d0d0d0;
  background: #fff;
}

.gallery-items {
  display: grid;
  grid-template-columns: repeat(4, 100px);
  grid-auto-rows: 22px;
  gap: 6px;
  padding: 5px 3px;
}

.style {
  justify-content: flex-start;
  padding-left: 4px;
  padding-bottom: 2px;
  font-size: 14px;
}

.style-normal {
  outline: 3px solid #c6c6c6;
  outline-offset: 0;
}

.style-bad { background: #ffc7ce; color: #9c0006; }
.style-good { background: #c6efce; color: #006100; }
.style-neutral { background: #ffe699; color: #9c5700; }
.style-calc { background: #f2f2f2; color: #fa7d00; border: 1px solid #7f7f7f; font-weight: bold; padding-left: 3px; }
.style-check { background: #a5a5a5; color: #fff; border: 3px double #3f3f3f; font-weight: bold; padding-left: 1px; }
.style-note { color: #7f7f7f; font-style: italic; }
.style-warn { color: #f01800; }

.gallery-scroll {
  display: flex;
  flex-direction: column;
  width: 15px;
  border-left: 1px solid #c6c6c6;
}

.gallery-scroll button {
  flex: 1;
  flex-direction: column;
  gap: 2px;
}

.gallery-scroll button + button {
  border-top: 1px solid #c6c6c6;
}

.gallery-scroll .off {
  background: #e6e6e6;
  opacity: .6;
}

.gallery-scroll .bar {
  width: 6px;
  height: 1px;
  background: #666;
}

/* Sort & filter drop-down */
.sort-filter {
  position: relative;
}

.menu {
  position: absolute;
  z-index: 10;
  left: 0;
  top: 69px;
  width: 145px;
  margin: 0;
  padding: 1px;
  list-style: none;
  background: #fff;
  border: 1px solid #c6c6c6;
  box-shadow: 0 1px 3px rgba(0, 0, 0, 0.2);
}

.menu button {
  width: 100%;
  height: 25px;
  justify-content: flex-start;
  gap: 11px;
  padding-left: 3px;
  color: #555;
}

.menu .hover {
  background: #c6c6c6;
  color: #262626;
}

.menu button:disabled {
  color: #b0b0b0;
}

.menu .divider {
  height: 1px;
  margin-left: 32px;
  margin-bottom: 1px;
  background: #e1e1e1;
}

.pointer {
  position: absolute;
  z-index: 11;
  left: 80px;
  top: 168px;
}

.ribbon-end {
  flex: 1;
  display: flex;
  justify-content: flex-end;
  align-items: flex-end;
}

.gauge {
  width: 8px;
  height: 51px;
  margin-bottom: 2px;
  border: 2px solid #777;
  border-radius: 5px;
  background: linear-gradient(#fff 62%, #2fa86b 62%);
}

/* Text inside icons */
.svg-ab {
  font: 600 10px "Open Sans", sans-serif;
  fill: #555;
}

.svg-num {
  font: 600 8px "Open Sans", sans-serif;
  fill: #555;
}

.svg-a,
.svg-z {
  font: 600 17px "Open Sans", sans-serif;
  fill: #4a7fb8;
}

.svg-z {
  fill: #9a6bb5;
}

.svg-a-sm,
.svg-z-sm {
  font: bold 9px "Open Sans", sans-serif;
  fill: #3f74ad;
}

.svg-z-sm {
  fill: #8a5fa8;
}

/* Formula bar */
.formula-bar {
  flex: none;
  display: flex;
  align-items: center;
  height: 48px;
  padding: 0 5px;
}

.name-box,
.fx-box,
.formula-box {
  display: flex;
  align-items: center;
  height: 28px;
  background: #fff;
  border: 1px solid #c6c6c6;
}

.name-box {
  width: 102px;
  padding: 0 6px;
}

.name-box input {
  width: 80px;
  font-size: 13px;
}

.name-box .caret {
  border-width: 5px 4px 0;
  width: 8px;
}

.dots {
  display: flex;
  flex-direction: column;
  gap: 3px;
  margin: 0 14px;
}

.dots i {
  width: 2px;
  height: 2px;
  background: #aaa;
}

.fx-box {
  width: 110px;
  margin-right: 3px;
}

.fx-box button {
  flex: 1;
}

.fx {
  font-family: "Liberation Serif", serif;
  font-size: 17px;
  font-weight: bold;
  color: #666;
}

.fx sub {
  font-size: 12px;
  margin-top: 4px;
}

.formula-box {
  flex: 1;
  padding: 0 3px 0 11px;
}

.formula-box input {
  flex: 1;
  padding-bottom: 2px;
  font-size: 15px;
  line-height: 20px;
  color: #444;
}

/* Sheet */
.workspace {
  flex: 1;
  min-height: 0;
  display: flex;
}

.sheet {
  flex: 1;
  min-width: 0;
  overflow: hidden;
  border-right: 1px solid #9b9b9b;
  border-bottom: 1px solid #9b9b9b;
  font-family: "Noto Sans CJK SC", sans-serif;
}

.sheet table {
  width: 1955px;
  table-layout: fixed;
  border-spacing: 0;
}

.sheet col { width: 150px; }
.sheet .col-head { width: 57px; }
.sheet .col-a { width: 248px; }

.sheet th {
  padding: 0 0 1px;
  background: #e6e6e6;
  font-weight: 300;
  font-size: 28px;
  line-height: 34px;
  color: #000;
}

.sheet thead th {
  height: 39px;
  border-bottom: 1px solid #9b9b9b;
  background: linear-gradient(#ccc, #9b9b9b) right / 1px 100% no-repeat #e6e6e6;
  padding-top: 3px;
}

.sheet thead .corner {
  background: #e6e6e6;
  padding: 3px 0 0 22px;
}

.sheet tbody th {
  height: 77px;
  vertical-align: bottom;
  border-right: 1px solid #9b9b9b;
  border-bottom: 1px solid #b8b8b8;
}

.sheet thead .current,
.sheet tbody .current {
  background-color: #d2d2d2;
  color: #1d6a45;
}

.sheet td {
  padding: 2px 0 0;
  background: #fff;
  border-right: 1px solid #d4d4d4;
  border-bottom: 1px solid #d4d4d4;
  text-align: center;
  font-weight: 300;
  font-size: 58px;
  line-height: 70px;
  color: #000;
}

.sheet .selected {
  position: relative;
  font-size: 60px;
}

.selected::before {
  content: "";
  position: absolute;
  inset: -2px;
  border: 2px solid #1d6a45;
}

.selected::after {
  content: "";
  position: absolute;
  right: -3px;
  bottom: -3px;
  width: 6px;
  height: 6px;
  background: #1d6a45;
  border: 1px solid #fff;
  border-width: 1px 0 0 1px;
}

/* Scroll bars */
.scroll-v {
  display: flex;
  flex-direction: column;
  width: 15px;
  margin: 2px 3px 0;
}

.scroll-v button,
.scroll-h button {
  flex: none;
  width: 15px;
  height: 15px;
  background: #fff;
  border: 1px solid #ababab;
}

.track {
  flex: 1;
  background: #dadada;
}

.thumb {
  background: #fff;
  border: 1px solid #ababab;
}

.scroll-v .thumb {
  height: 50%;
}

.scroll-h .thumb {
  width: 91%;
  height: 100%;
}

.arrow {
  width: 4px;
  border: 4px solid transparent;
}

.arrow-left {
  border-left: 0;
  border-right-color: #666;
}

.arrow-right {
  border-right: 0;
  border-left-color: #666;
}

/* Sheet tabs */
.sheet-bar {
  flex: none;
  display: flex;
  align-items: center;
  height: 27px;
  padding-right: 21px;
}

.sheet-nav {
  display: flex;
  gap: 24px;
  width: 100px;
  padding-left: 27px;
  opacity: .3;
}

.sheet-tab {
  align-self: flex-start;
  width: 69px;
  height: 25px;
  margin-top: -1px;
  background: #fff;
  border: 1px solid #9b9b9b;
  border-top: 0;
  border-bottom: 2px solid #1d6a45;
  color: #1d6a45;
  font-size: 13px;
}

.add-sheet {
  margin-left: 32px;
  margin-right: auto;
}

.sheet-bar .dots {
  margin-right: 22px;
}

.scroll-h {
  flex: none;
  display: flex;
  width: 38%;
}

/* Status bar */
.status-bar {
  flex: none;
  display: flex;
  align-items: center;
  height: 23px;
  background: #f3f3f3;
  border-top: 1px solid #c6c6c6;
}

.status-text {
  margin-left: 8px;
  margin-right: auto;
}

.view-btn {
  width: 40px;
  height: 22px;
}

.view-btn.on {
  background: #c6c6c6;
}

.zoom-btn {
  width: 19px;
}

.zoom-slider {
  appearance: none;
  width: 100px;
  height: 12px;
  background: linear-gradient(#ababab, #ababab) center / 100% 1px no-repeat, linear-gradient(#ababab, #ababab) center / 1px 6px no-repeat;
}

.zoom-slider::-webkit-slider-thumb {
  appearance: none;
  width: 5px;
  height: 11px;
  background: #666;
}

.zoom-value {
  width: 48px;
  text-align: center;
  font-size: 13px;
}

/* Watermark */
.watermark {
  position: absolute;
  z-index: 5;
  right: 101px;
  bottom: 30px;
  pointer-events: none;
}

.mark {
  fill: #fff;
  opacity: .9;
  filter: drop-shadow(0 0 1px #999) drop-shadow(0 0 1px #bbb);
}

.mark-baidu {
  font: bold 78px "Liberation Sans", sans-serif;
}

.mark-cn {
  font: 900 58px "Noto Sans CJK SC", sans-serif;
}

.mark-url {
  font: 39px "Noto Sans", sans-serif;
}

.mark-du {
  font: bold 48px "Liberation Sans", sans-serif;
  fill: #fff;
  stroke: #c8c8c8;
  stroke-width: 2px;
}
```
